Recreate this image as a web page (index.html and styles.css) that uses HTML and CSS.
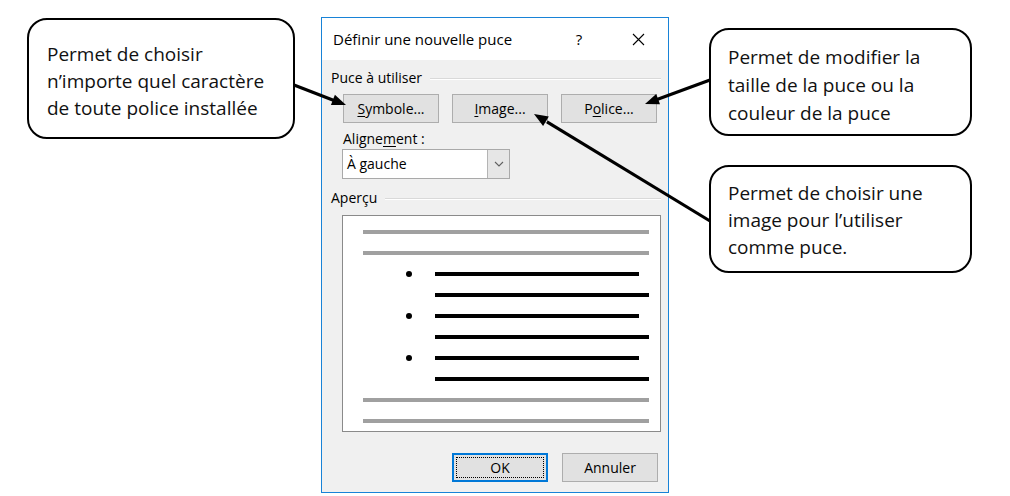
FILE: index.html
```html
<!DOCTYPE html>
<html lang="fr">
<head>
	<title>Définir une nouvelle puce</title>
	<meta charset="utf-8">
	<link rel="stylesheet" href="styles.css">
</head>
<body>

<!-- wrap -->
<div id="p_wrapper">

	<div class="col col-left">
		<div class="bubble bubble-symbol">Permet de choisir<br>n’importe quel caractère<br>de toute police installée</div>
	</div>

	<!-- dialog -->
	<div class="dialog">
		<div class="dialog-title">
			<span class="title-text">Définir une nouvelle puce</span>
			<span class="title-help">?</span>
			<span class="title-close">
				<svg width="13" height="13" viewBox="0 0 13 13"><path d="M1 1 L12 12 M12 1 L1 12" stroke="#000" stroke-width="1.1" fill="none"/></svg>
			</span>
		</div>

		<div class="dialog-body">
			<div class="group-label"><span>Puce à utiliser</span></div>
			<div class="btn-row">
				<button class="btn"><u>S</u>ymbole...</button>
				<button class="btn"><u>I</u>mage...</button>
				<button class="btn">P<u>o</u>lice...</button>
			</div>

			<div class="field-label">Aligne<u>m</u>ent :</div>
			<div class="select">
				<span class="select-value">À gauche</span>
				<span class="select-arrow">
					<svg width="10" height="6" viewBox="0 0 10 6"><path d="M1 1 L5 5 L9 1" stroke="#606060" stroke-width="1.1" fill="none"/></svg>
				</span>
			</div>

			<div class="group-label group-preview"><span>Aperçu</span></div>
			<div class="preview">
				<div class="pv-line"></div>
				<div class="pv-line"></div>
				<div class="pv-item"><span class="pv-bullet"></span><span class="pv-text short"></span></div>
				<div class="pv-item"><span class="pv-text long indent"></span></div>
				<div class="pv-item"><span class="pv-bullet"></span><span class="pv-text short"></span></div>
				<div class="pv-item"><span class="pv-text long indent"></span></div>
				<div class="pv-item"><span class="pv-bullet"></span><span class="pv-text short"></span></div>
				<div class="pv-item"><span class="pv-text long indent"></span></div>
				<div class="pv-line"></div>
				<div class="pv-line"></div>
			</div>

			<div class="dialog-actions">
				<button class="btn btn-default"><span>OK</span></button>
				<button class="btn">Annuler</button>
			</div>
		</div>
	</div>
	<!-- //dialog -->

	<div class="col col-right">
		<div class="bubble bubble-police">Permet de modifier la<br>taille de la puce ou la<br>couleur de la puce</div>
		<div class="bubble bubble-image">Permet de choisir une<br>image pour l’utiliser<br>comme puce.</div>
	</div>

	<!-- arrows -->
	<svg class="arrows" width="1010" height="496" viewBox="0 0 1010 496">
		<g stroke="#000" stroke-width="3.2" fill="none">
			<line x1="294" y1="85" x2="334" y2="100.4"/>
			<line x1="710" y1="80" x2="657" y2="99.5"/>
			<line x1="710" y1="221" x2="547" y2="121.9"/>
		</g>
		<g fill="#000">
			<polygon points="346,105 330.9,105.1 334.9,94.8"/>
			<polygon points="645,104 656.2,94 660,104.3"/>
			<polygon points="534,114 548.8,116.6 543.1,126"/>
		</g>
	</svg>

</div>
<!-- //wrap -->

</body>
</html>
```

FILE: styles.css
```css
* {margin: 0; padding: 0; box-sizing: border-box;}
body {background: #fff; font-family: "Open Sans", "Noto Sans", sans-serif; color: #000;}

#p_wrapper {position: relative; display: flex; width: 1010px; height: 496px; overflow: hidden;}

/* callouts */
.col-left {padding: 18px 0 0 27px;}
.col-right {display: flex; flex-direction: column; gap: 29px; padding: 28px 0 0 40px;}

.bubble {border: 2px solid #000; border-radius: 20px; font-size: 19px; line-height: 27px; color: #111; white-space: nowrap;}
.bubble-symbol {width: 268px; height: 121px; padding: 21px 0 0 18px;}
.bubble-police {width: 263px; height: 108px; padding: 13px 0 0 17px; line-height: 28px;}
.bubble-image {width: 263px; height: 108px; padding: 13px 0 0 17px;}

.arrows {position: absolute; top: 0; left: 0; pointer-events: none;}

/* dialog */
.dialog {display: flex; flex-direction: column; width: 348px; height: 476px; margin: 17px 0 0 26px; border: 1px solid #1883d7; background: #f0f0f0; font-size: 14px;}

.dialog-title {display: flex; align-items: center; height: 42px; background: #fff; font-size: 15px;}
.title-text {flex: 1; padding-left: 11px;}
.title-help {width: 58px; text-align: center;}
.title-close {display: flex; justify-content: center; width: 60px;}

.dialog-body {padding: 9px 7px 0 9px;}

.group-label {display: flex; align-items: center; gap: 8px; line-height: 18px;}
.group-label:after {content: ''; flex: 1; height: 1px; background: #d9d9d9; box-shadow: 0 1px 0 #fff;}
.group-preview {margin-top: 10px;}

.btn-row {display: flex; gap: 13px; margin-top: 7px; padding-left: 12px;}
.btn {width: 96px; height: 29px; border: 1px solid #adadad; background: #e1e1e1; font: inherit; color: #000;}
.btn u {text-underline-offset: 2px;}
.btn-default {padding: 2px; border: 2px solid #0078d7;}
.btn-default span {display: flex; align-items: center; justify-content: center; height: 100%; border: 1px dotted #000;}

.field-label {margin-top: 7px; padding-left: 12px; line-height: 18px;}
.field-label u {text-underline-offset: 2px;}

.select {display: flex; width: 168px; height: 30px; margin: 1px 0 0 11px; border: 1px solid #a9a9a9; background: #fff;}
.select-value {flex: 1; padding-left: 4px; line-height: 28px;}
.select-arrow {display: flex; align-items: center; justify-content: center; width: 22px; border-left: 1px solid #b4b4b4; background: #e6e6e6;}

/* preview */
.preview {display: flex; flex-direction: column; gap: 17px; width: 319px; height: 217px; margin: 8px 0 0 11px; padding: 14px 0 0 20px; border: 1px solid #8a8a8a; background: #fff;}
.pv-line {width: 286px; height: 4px; background: #a0a0a0;}
.pv-item {display: flex; align-items: center; height: 4px;}
.pv-bullet {width: 6px; height: 6px; margin-left: 43px; border-radius: 50%; background: #000;}
.pv-text {height: 4px; background: #000;}
.pv-text.short {width: 204px; margin-left: 23px;}
.pv-text.long {width: 214px;}
.pv-text.indent {margin-left: 72px;}

.dialog-actions {display: flex; gap: 14px; margin-top: 21px; padding-left: 121px;}
```
